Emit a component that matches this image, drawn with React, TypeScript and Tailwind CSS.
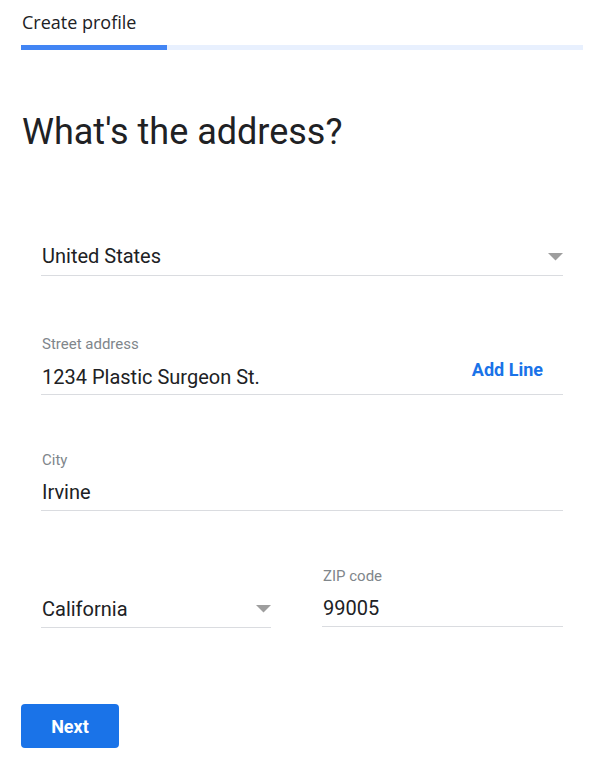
import React from "react";

function Caret() {
  return (
    <svg width="15" height="8" viewBox="0 0 15 8" className="shrink-0">
      <path d="M0 0 L15 0 L7.5 7.5 Z" fill="#9e9e9e" />
    </svg>
  );
}

export default function App() {
  return (
    <div className="min-h-[766px] w-[601px] bg-white text-[#202124]" style={{ fontFamily: "Roboto, 'Liberation Sans', sans-serif" }}>
      <div className="px-[21px] pt-[10px] w-[562px] box-content">
        <div className="pl-px text-[18px] leading-[24px] text-[#202124]" style={{ fontFamily: "'Open Sans', Roboto, sans-serif" }}>Create profile</div>
        <div className="mt-[11px] flex h-[5px] w-[562px] bg-[#e8f0fe]">
          <div className="h-full w-[146px] bg-[#4285f4]" />
        </div>

        <h1 className="mt-[60px] pl-px text-[36px] leading-[44px] font-normal text-[#202124]">What's the address?</h1>

        <div className="mx-[20px] mt-[85px] flex flex-col">
          <div className="flex h-[37px] items-center justify-between border-b border-[#dadce0] pl-px text-[20px]">
            <span className="-mt-[2px]">United States</span>
            <Caret />
          </div>

          <div className="mt-[58px] pl-px text-[15px] leading-[20px] text-[#80868b]">Street address</div>
          <div className="mt-[4px] flex h-[37px] items-center justify-between border-b border-[#dadce0] pl-px text-[20px]">
            <span className="pt-[2px]">1234 Plastic Surgeon St.</span>
            <span className="mr-[20px] mb-[14px] text-[18px] font-bold text-[#1a73e8]">Add Line</span>
          </div>

          <div className="mt-[55px] pl-px text-[15px] leading-[20px] text-[#80868b]">City</div>
          <div className="mt-[4px] flex h-[37px] items-center border-b border-[#dadce0] pl-px text-[20px]">
            <span>Irvine</span>
          </div>

          <div className="mt-[55px] flex items-end">
            <div className="flex h-[37px] w-[230px] items-center justify-between border-b border-[#dadce0] pl-px text-[20px]">
              <span>California</span>
              <Caret />
            </div>
            <div className="ml-[51px] flex flex-1 flex-col mb-px">
              <div className="pl-px text-[15px] leading-[20px] text-[#80868b]">ZIP code</div>
              <div className="mt-[4px] flex h-[37px] items-center border-b border-[#dadce0] pl-px text-[20px]">
                <span>99005</span>
              </div>
            </div>
          </div>
        </div>

        <button className="mt-[76px] h-[44px] w-[98px] rounded-[4px] bg-[#1a73e8] text-[18px] font-bold text-white">Next</button>
      </div>
    </div>
  );
}
